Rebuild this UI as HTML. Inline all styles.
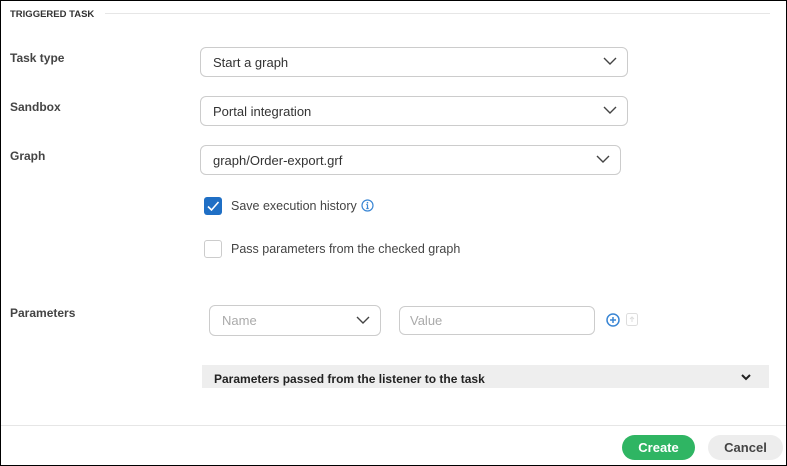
<!DOCTYPE html>
<html><head><style>
*{box-sizing:border-box;margin:0;padding:0}
body{width:787px;height:466px;background:#fff;font-family:"Liberation Sans",sans-serif;color:#333;position:relative;overflow:hidden}
.frame{position:absolute;left:0;top:0;width:787px;height:466px;border:1px solid #000}
.abs{position:absolute}
.lbl{position:absolute;left:10px;font-size:12px;font-weight:bold;color:#444}
.sel{position:absolute;border:1px solid #ccc;border-radius:6px;font-size:13px;color:#333;padding-left:12px;display:flex;align-items:center}
.chev{position:absolute;right:10px;top:50%;margin-top:-5px}
.cb{position:absolute;width:18px;height:18px;border-radius:3px}
.txt{position:absolute;font-size:12.5px;color:#444}
</style></head><body>
<div class="frame"></div>
<div class="abs" style="left:10px;top:9px;font-size:9.5px;font-weight:bold;color:#333">TRIGGERED TASK</div>
<div class="abs" style="left:105px;top:13px;width:665px;height:1px;background:#e6e6e6"></div>

<div class="lbl" style="top:51px">Task type</div>
<div class="lbl" style="top:100px">Sandbox</div>
<div class="lbl" style="top:149px">Graph</div>
<div class="lbl" style="top:306px">Parameters</div>

<div class="sel" style="left:200px;top:47px;width:428px;height:30px">Start a graph<svg class="chev" width="14" height="9" viewBox="0 0 14 9"><path d="M1 1l6 6 6-6" fill="none" stroke="#444" stroke-width="1.4"/></svg></div>
<div class="sel" style="left:200px;top:96px;width:428px;height:30px">Portal integration<svg class="chev" width="14" height="9" viewBox="0 0 14 9"><path d="M1 1l6 6 6-6" fill="none" stroke="#444" stroke-width="1.4"/></svg></div>
<div class="sel" style="left:200px;top:145px;width:421px;height:30px">graph/Order-export.grf<svg class="chev" width="14" height="9" viewBox="0 0 14 9"><path d="M1 1l6 6 6-6" fill="none" stroke="#444" stroke-width="1.4"/></svg></div>

<div class="cb" style="left:204px;top:197px;background:#1f6fc5"><svg width="18" height="18" viewBox="0 0 18 18"><path d="M4 9.5l3.5 3.5 7-8" fill="none" stroke="#fff" stroke-width="1.6"/></svg></div>
<div class="txt" style="left:231px;top:199px">Save execution history</div>
<svg class="abs" style="left:361px;top:199px" width="13" height="13" viewBox="0 0 13 13"><circle cx="6.5" cy="6.5" r="5.5" fill="none" stroke="#3a86d4" stroke-width="1.2"/><path d="M6.5 5.5v4M5.3 9.5h2.4M5.3 5.5h1.2" stroke="#3a86d4" stroke-width="1.2" fill="none"/><circle cx="6.5" cy="3.7" r=".8" fill="#3a86d4"/></svg>
<div class="cb" style="left:204px;top:240px;border:1px solid #ccc;background:#fff"></div>
<div class="txt" style="left:231px;top:242px">Pass parameters from the checked graph</div>

<div class="sel" style="left:209px;top:305px;width:172px;height:31px;color:#aaa">Name<svg class="chev" width="14" height="9" viewBox="0 0 14 9"><path d="M1 1l6 6 6-6" fill="none" stroke="#444" stroke-width="1.4"/></svg></div>
<div class="sel" style="left:399px;top:306px;width:196px;height:29px;color:#aaa;padding-left:10px">Value</div>
<svg class="abs" style="left:606px;top:313px" width="14" height="14" viewBox="0 0 14 14"><circle cx="7" cy="7" r="6" fill="none" stroke="#3a86d4" stroke-width="1.5"/><path d="M7 4v6M4 7h6" stroke="#3a86d4" stroke-width="1.5"/></svg>
<svg class="abs" style="left:626px;top:313px" width="12" height="13" viewBox="0 0 12 13"><rect x=".5" y=".5" width="11" height="12" rx="2" fill="none" stroke="#ddd"/><path d="M6 9V4M4 6l2-2 2 2" stroke="#ddd" fill="none"/></svg>

<div class="abs" style="left:202px;top:365px;width:567px;height:23px;background:#eee;font-size:12px;font-weight:bold;color:#222;padding:7px 0 0 12px">Parameters passed from the listener to the task</div>
<svg class="abs" style="left:741px;top:374px" width="10" height="7" viewBox="0 0 10 7"><path d="M1 1l4 4 4-4" fill="none" stroke="#222" stroke-width="2"/></svg>

<div class="abs" style="left:1px;top:425px;width:785px;height:1px;background:#e6e6e6"></div>
<div class="abs" style="left:622px;top:435px;width:73px;height:25px;border-radius:13px;background:#2fb563;color:#fff;font-size:13px;font-weight:bold;text-align:center;line-height:25px">Create</div>
<div class="abs" style="left:708px;top:435px;width:75px;height:25px;border-radius:13px;background:#ededed;color:#444;font-size:13px;font-weight:bold;text-align:center;line-height:25px">Cancel</div>
</body></html>
